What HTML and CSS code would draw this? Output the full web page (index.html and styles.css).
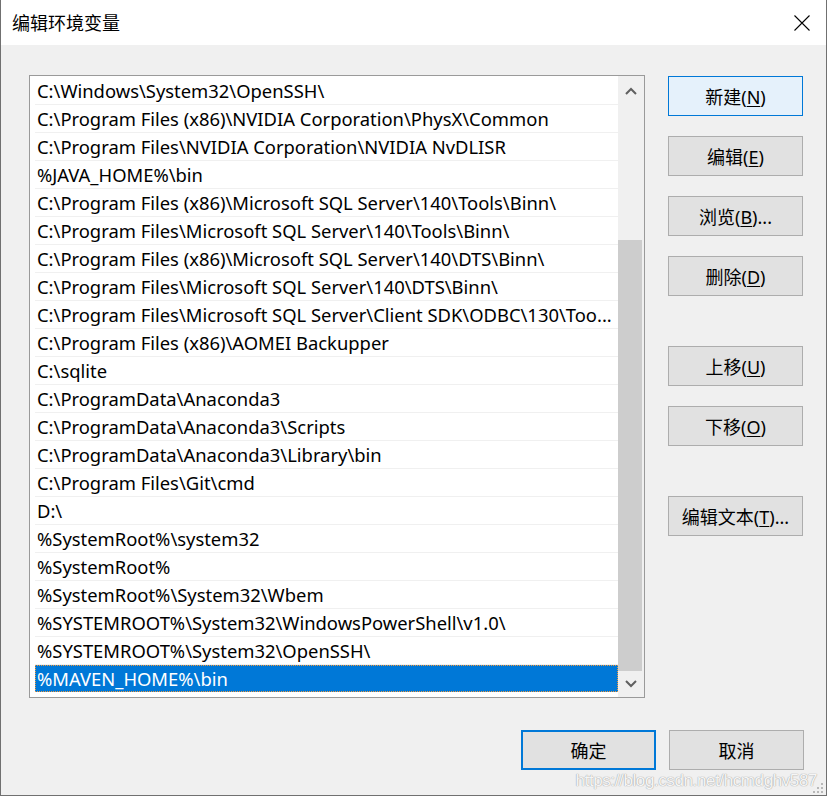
FILE: index.html
```html
<!DOCTYPE html>
<html lang="zh-CN">
<head>
    <meta charset="UTF-8">
    <meta name="viewport" content="width=device-width, initial-scale=1.0">
    <title>编辑环境变量</title>
    <link rel="stylesheet" href="styles.css">
</head>
<body>
    <div class="window">
        <div class="titlebar">
            <span class="title">编辑环境变量</span>
            <svg class="close" width="18" height="18" viewBox="0 0 18 18">
                <path d="M1.5 1.5 L16.5 16.5 M16.5 1.5 L1.5 16.5" stroke="#000" stroke-width="1.1" fill="none"/>
            </svg>
        </div>

        <div class="main">
            <div class="listbox">
                <div class="rows">
                    <div class="row">C:\Windows\System32\OpenSSH\</div>
                    <div class="row">C:\Program Files (x86)\NVIDIA Corporation\PhysX\Common</div>
                    <div class="row">C:\Program Files\NVIDIA Corporation\NVIDIA NvDLISR</div>
                    <div class="row">%JAVA_HOME%\bin</div>
                    <div class="row">C:\Program Files (x86)\Microsoft SQL Server\140\Tools\Binn\</div>
                    <div class="row">C:\Program Files\Microsoft SQL Server\140\Tools\Binn\</div>
                    <div class="row">C:\Program Files (x86)\Microsoft SQL Server\140\DTS\Binn\</div>
                    <div class="row">C:\Program Files\Microsoft SQL Server\140\DTS\Binn\</div>
                    <div class="row">C:\Program Files\Microsoft SQL Server\Client SDK\ODBC\130\Too...</div>
                    <div class="row">C:\Program Files (x86)\AOMEI Backupper</div>
                    <div class="row">C:\sqlite</div>
                    <div class="row">C:\ProgramData\Anaconda3</div>
                    <div class="row">C:\ProgramData\Anaconda3\Scripts</div>
                    <div class="row">C:\ProgramData\Anaconda3\Library\bin</div>
                    <div class="row">C:\Program Files\Git\cmd</div>
                    <div class="row">D:\</div>
                    <div class="row">%SystemRoot%\system32</div>
                    <div class="row">%SystemRoot%</div>
                    <div class="row">%SystemRoot%\System32\Wbem</div>
                    <div class="row">%SYSTEMROOT%\System32\WindowsPowerShell\v1.0\</div>
                    <div class="row">%SYSTEMROOT%\System32\OpenSSH\</div>
                    <div class="row selected">%MAVEN_HOME%\bin</div>
                </div>
                <div class="scrollbar">
                    <div class="arrow up">
                        <svg width="12" height="8" viewBox="0 0 12 8"><polyline points="1,7 6,2 11,7" stroke="#606060" stroke-width="2" fill="none"/></svg>
                    </div>
                    <div class="track">
                        <div class="thumb"></div>
                    </div>
                    <div class="arrow down">
                        <svg width="12" height="8" viewBox="0 0 12 8"><polyline points="1,1 6,6 11,1" stroke="#606060" stroke-width="2" fill="none"/></svg>
                    </div>
                </div>
            </div>

            <div class="side">
                <button class="btn focused">新建(<u>N</u>)</button>
                <button class="btn">编辑(<u>E</u>)</button>
                <button class="btn">浏览(<u>B</u>)...</button>
                <button class="btn">删除(<u>D</u>)</button>
                <button class="btn spaced">上移(<u>U</u>)</button>
                <button class="btn">下移(<u>O</u>)</button>
                <button class="btn spaced">编辑文本(<u>T</u>)...</button>
            </div>
        </div>

        <div class="footer">
            <button class="btn default">确定</button>
            <button class="btn">取消</button>
        </div>

        <div class="watermark">https://blog.csdn.net/hcmdghv587</div>
        <svg class="grip" width="10" height="10" viewBox="0 0 10 10">
            <rect x="8" y="0" width="2" height="2" fill="#b8b8b8"/>
            <rect x="4" y="4" width="2" height="2" fill="#b8b8b8"/>
            <rect x="8" y="4" width="2" height="2" fill="#b8b8b8"/>
            <rect x="0" y="8" width="2" height="2" fill="#b8b8b8"/>
            <rect x="4" y="8" width="2" height="2" fill="#b8b8b8"/>
            <rect x="8" y="8" width="2" height="2" fill="#b8b8b8"/>
        </svg>
    </div>
</body>
</html>
```

FILE: styles.css
```css
body {
    margin: 0;
    font-family: "Noto Sans", "Noto Sans CJK SC", sans-serif;
    font-size: 18px;
    color: #000;
}

.window {
    position: relative;
    width: 827px;
    height: 796px;
    box-sizing: border-box;
    border: 1px solid #707070;
    border-top: none;
    background: #f0f0f0;
    display: flex;
    flex-direction: column;
}

.titlebar {
    height: 45px;
    background: #fff;
    display: flex;
    align-items: center;
    justify-content: space-between;
    padding: 0 15px 0 11px;
    flex-shrink: 0;
}

.title {
    font-size: 18px;
    line-height: 1;
}

.main {
    display: flex;
    padding: 30px 22px 0 28px;
    gap: 23px;
}

.listbox {
    width: 616px;
    height: 623px;
    box-sizing: border-box;
    border: 1px solid #9a9a9a;
    background: #fff;
    display: flex;
}

.rows {
    flex: 1;
    min-width: 0;
    padding: 1px 0 0 5px;
}

.row {
    height: 27px;
    line-height: 28px;
    font-size: 18.4px;
    border-bottom: 1px solid #f0f0f0;
    padding-left: 2px;
    white-space: nowrap;
    overflow: hidden;
}

.row.selected {
    background: #0078d7;
    color: #fff;
    border-bottom: none;
    outline: 1px dotted #f39a3c;
    outline-offset: -1px;
}

.scrollbar {
    width: 26px;
    background: #f0f0f0;
    display: flex;
    flex-direction: column;
}

.arrow {
    height: 26px;
    display: flex;
    justify-content: center;
    align-items: center;
}

.arrow.up {
    padding-top: 4px;
    box-sizing: border-box;
}

.track {
    flex: 1;
    display: flex;
    flex-direction: column;
    padding-top: 138px;
}

.thumb {
    flex: 1;
    width: 24px;
    background: #cdcdcd;
}

.side {
    display: flex;
    flex-direction: column;
    gap: 20px;
    padding-top: 1px;
}

.btn {
    width: 135px;
    height: 40px;
    box-sizing: border-box;
    border: 1px solid #adadad;
    background: #e1e1e1;
    font-family: "Noto Sans", "Noto Sans CJK SC", sans-serif;
    font-size: 18px;
    color: #000;
    padding: 0;
}

.btn u {
    text-underline-offset: 2px;
}

.btn.focused {
    background: #e5f1fb;
    border-color: #0078d7;
}

.btn.spaced {
    margin-top: 30px;
}

.btn.default {
    border: 2px solid #0078d7;
}

.footer {
    display: flex;
    justify-content: flex-end;
    gap: 13px;
    padding: 32px 22px 0 0;
}

.watermark {
    position: absolute;
    right: 9px;
    bottom: 4px;
    font-family: "Liberation Sans", Arial, sans-serif;
    font-size: 17px;
    letter-spacing: -0.4px;
    color: rgba(255, 255, 255, 0.92);
    text-shadow: 0 0 1px #9a9a9a, 0 0 1px #b0b0b0;
}

.grip {
    position: absolute;
    right: 3px;
    bottom: 2px;
}
```
